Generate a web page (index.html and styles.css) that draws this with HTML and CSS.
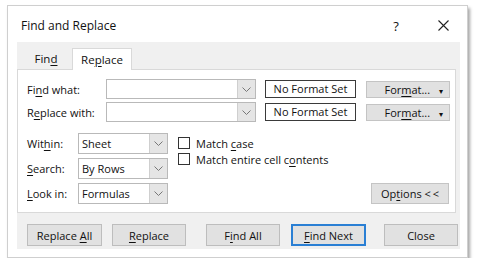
FILE: index.html
```html
<!DOCTYPE html>
<html lang="en">
<head>
    <meta charset="UTF-8">
    <title>Find and Replace</title>
    <link rel="stylesheet" href="styles.css">
</head>
<body>
    <div class="dialog">
        <div class="titlebar">
            <span class="title">Find and Replace</span>
            <span class="help">?</span>
            <span class="close-x">
                <svg width="11" height="11" viewBox="0 0 11 11"><path d="M0.5 0.5 L10.5 10.5 M10.5 0.5 L0.5 10.5" stroke="#222" stroke-width="1.1" fill="none"/></svg>
            </span>
        </div>
        <div class="content">
            <div class="tabs">
                <div class="tab">Fin<u>d</u></div>
                <div class="tab active">Re<u>p</u>lace</div>
            </div>
            <div class="panel">
                <div class="row">
                    <label class="label">Fi<u>n</u>d what:</label>
                    <div class="combo">
                        <span class="combo-text"></span>
                        <span class="drop"><svg width="9" height="5" viewBox="0 0 9 5"><path d="M0.5 0.5 L4.5 4.5 L8.5 0.5" stroke="#777" fill="none"/></svg></span>
                    </div>
                    <div class="noformat">No Format Set</div>
                    <button class="btn fmt">For<u>m</u>at... <span class="caret">&#9662;</span></button>
                </div>
                <div class="row">
                    <label class="label">R<u>e</u>place with:</label>
                    <div class="combo">
                        <span class="combo-text"></span>
                        <span class="drop"><svg width="9" height="5" viewBox="0 0 9 5"><path d="M0.5 0.5 L4.5 4.5 L8.5 0.5" stroke="#777" fill="none"/></svg></span>
                    </div>
                    <div class="noformat">No Format Set</div>
                    <button class="btn fmt">For<u>m</u>at... <span class="caret">&#9662;</span></button>
                </div>
                <div class="options">
                    <div class="selects">
                        <div class="srow">
                            <label class="slabel">Wit<u>h</u>in:</label>
                            <div class="select"><span class="combo-text">Sheet</span><span class="drop"><svg width="9" height="5" viewBox="0 0 9 5"><path d="M0.5 0.5 L4.5 4.5 L8.5 0.5" stroke="#777" fill="none"/></svg></span></div>
                        </div>
                        <div class="srow">
                            <label class="slabel"><u>S</u>earch:</label>
                            <div class="select"><span class="combo-text">By Rows</span><span class="drop"><svg width="9" height="5" viewBox="0 0 9 5"><path d="M0.5 0.5 L4.5 4.5 L8.5 0.5" stroke="#777" fill="none"/></svg></span></div>
                        </div>
                        <div class="srow">
                            <label class="slabel"><u>L</u>ook in:</label>
                            <div class="select"><span class="combo-text">Formulas</span><span class="drop"><svg width="9" height="5" viewBox="0 0 9 5"><path d="M0.5 0.5 L4.5 4.5 L8.5 0.5" stroke="#777" fill="none"/></svg></span></div>
                        </div>
                    </div>
                    <div class="checks">
                        <div class="check"><span class="box"></span><span>Match <u>c</u>ase</span></div>
                        <div class="check"><span class="box"></span><span>Match entire cell c<u>o</u>ntents</span></div>
                    </div>
                    <div class="opt-wrap">
                        <button class="btn options-btn">Op<u>t</u>ions &lt;&thinsp;&lt;</button>
                    </div>
                </div>
            </div>
            <div class="buttons">
                <button class="btn act w75">Replace <u>A</u>ll</button>
                <button class="btn act w74 g10"><u>R</u>eplace</button>
                <button class="btn act w74 g20">F<u>i</u>nd All</button>
                <button class="btn act w75 g11 default"><u>F</u>ind Next</button>
                <button class="btn act w74 g18">Close</button>
            </div>
        </div>
    </div>
</body>
</html>
```

FILE: styles.css
```css
body {
    margin: 0;
    background: #fff;
    font-family: 'Open Sans', 'Noto Sans', 'Liberation Sans', sans-serif;
    font-size: 11px;
    color: #111;
}
u {
    text-decoration-thickness: 1px;
    text-underline-offset: 2px;
}
.dialog {
    box-sizing: border-box;
    width: 461px;
    height: 253px;
    margin: 5px 0 0 7px;
    background: #fff;
    border: 1px solid #cfcfcf;
    box-shadow: 2px 3px 3px rgba(0,0,0,0.35);
}
.titlebar {
    height: 36px;
    display: flex;
    align-items: center;
    padding-left: 13px;
    padding-right: 9px;
}
.title {
    flex: 1;
    font-size: 12px;
    padding-top: 3px;
}
.help {
    width: 20px;
    text-align: center;
    font-size: 13px;
    padding-top: 3px;
}
.close-x {
    width: 30px;
    margin-left: 22px;
    display: flex;
    justify-content: center;
    padding-top: 3px;
}
.content {
    margin: 0 7px 0 9px;
    height: 207px;
    background: #f0f0f0;
}
.tabs {
    height: 27px;
    display: flex;
    align-items: flex-end;
    padding-left: 3px;
}
.tab {
    width: 52px;
    height: 21px;
    line-height: 21px;
    text-align: center;
    font-size: 11.5px;
}
.tab.active {
    width: 58px;
    background: #fff;
    border: 1px solid #d9d9d9;
    border-bottom: none;
    margin-bottom: -1px;
    position: relative;
    z-index: 1;
}
.panel {
    box-sizing: border-box;
    height: 144px;
    margin-right: 4px;
    background: #fff;
    border: 1px solid #d9d9d9;
    padding: 9px 5px 0 9px;
}
.row {
    display: flex;
    align-items: center;
    height: 20px;
}
.row + .row {
    margin-top: 3px;
}
.label {
    width: 79px;
}
.combo, .select {
    box-sizing: border-box;
    display: flex;
    height: 20px;
    border: 1px solid #b9b9b9;
    background: #fff;
}
.combo {
    width: 150px;
}
.combo-text {
    flex: 1;
    line-height: 18px;
    padding-left: 3px;
}
.drop {
    width: 17px;
    display: flex;
    align-items: center;
    justify-content: center;
    background: #e5e5e5;
    border-left: 1px solid #cfcfcf;
}
.noformat {
    box-sizing: border-box;
    width: 91px;
    height: 18px;
    margin-left: 9px;
    border: 1.5px solid #3a3a3a;
    text-align: center;
    line-height: 15px;
}
.btn {
    box-sizing: border-box;
    font-family: inherit;
    font-size: 11px;
    color: #111;
    background: #e1e1e1;
    border: 1px solid #c4c4c4;
    padding: 0;
    height: 22px;
}
.fmt {
    width: 84px;
    height: 17px;
    margin-left: 10px;
    text-align: right;
    padding-right: 6px;
}
.caret {
    font-size: 8px;
    margin-left: 6px;
}
.options {
    display: flex;
    margin-top: 11px;
}
.selects {
    display: flex;
    flex-direction: column;
    gap: 4px;
}
.srow {
    display: flex;
    align-items: center;
}
.slabel {
    width: 51px;
}
.select {
    width: 90px;
    height: 21px;
}
.select .combo-text {
    line-height: 19px;
}
.checks {
    margin-left: 10px;
    padding-top: 4px;
    display: flex;
    flex-direction: column;
    gap: 4px;
}
.check {
    display: flex;
    align-items: center;
    height: 12px;
}
.box {
    box-sizing: border-box;
    width: 12px;
    height: 12px;
    border: 1px solid #333;
    margin-right: 6px;
}
.opt-wrap {
    flex: 1;
    display: flex;
    justify-content: flex-end;
    align-items: flex-end;
    padding-right: 1px;
}
.options-btn {
    width: 78px;
    height: 21px;
}
.buttons {
    display: flex;
    padding: 11px 0 0 10px;
}
.act {
    background: #e1e1e1;
    border-color: #bdbdbd;
}
.w75 { width: 75px; }
.w74 { width: 74px; }
.g10 { margin-left: 10px; }
.g20 { margin-left: 20px; }
.g11 { margin-left: 11px; }
.g18 { margin-left: 18px; }
.default {
    border: 2px solid #2a7fd4;
}
```
